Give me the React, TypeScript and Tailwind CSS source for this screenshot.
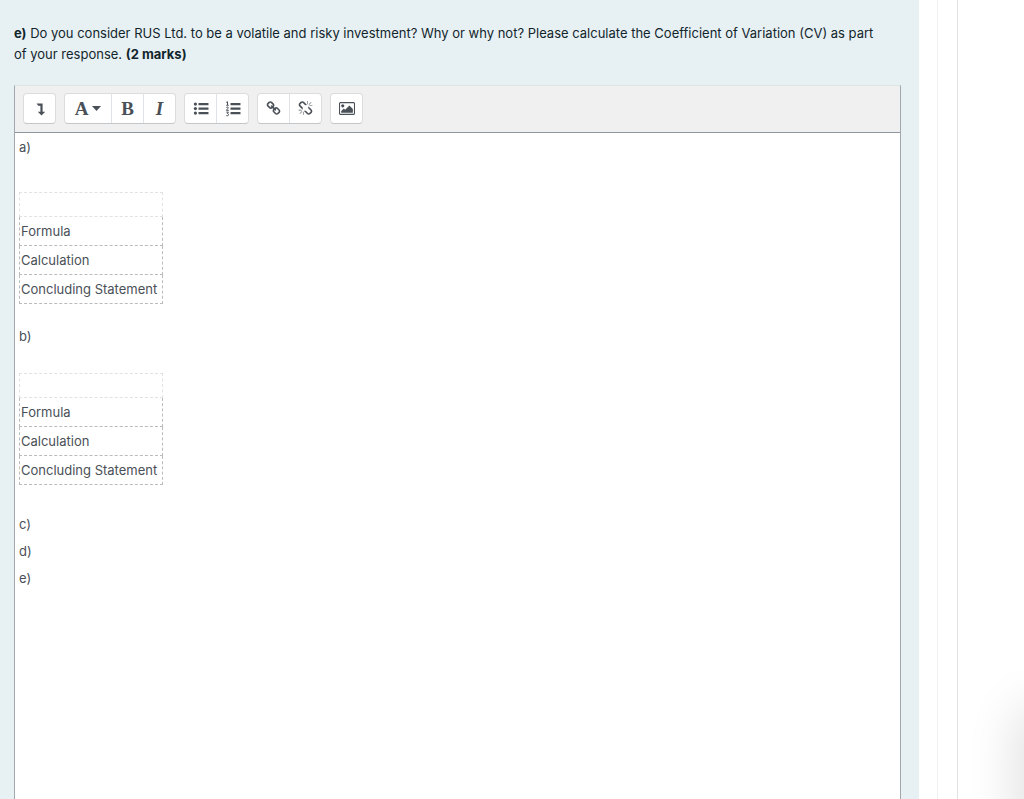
import type { ReactNode } from "react";

type IconProps = { path: string; viewBox?: string; className?: string };

function Glyph({ path, viewBox = "0 0 1792 1792", className = "size-[15px]" }: IconProps) {
  return (
    <svg viewBox={viewBox} className={className} fill="currentColor" aria-hidden="true">
      <path d={path} />
    </svg>
  );
}

const LINK =
  "M1520 1216q0-40-28-68l-208-208q-28-28-68-28-42 0-72 32 3 3 19 18.5t21.5 21.5 15 19 13 25.5 3.5 27.5q0 40-28 68t-68 28q-15 0-27.5-3.5t-25.5-13-19-15-21.5-21.5-18.5-19q-33 31-33 73 0 40 28 68l206 207q27 27 68 27 40 0 68-26l147-146q28-28 28-67zm-703-705q0-40-28-68l-206-207q-28-28-68-28-39 0-68 27l-147 146q-28 28-28 67 0 40 28 68l208 208q27 27 68 27 42 0 72-31-3-3-19-18.5t-21.5-21.5-15-19-13-25.5-3.5-27.5q0-40 28-68t68-28q15 0 27.5 3.5t25.5 13 19 15 21.5 21.5 18.5 19q33-31 33-73zm895 705q0 120-85 203l-147 146q-83 83-203 83-121 0-204-85l-206-207q-83-83-83-203 0-123 88-209l-88-88q-86 88-208 88-120 0-204-84l-208-208q-84-84-84-204t85-203l147-146q83-83 203-83 121 0 204 85l206 207q83 83 83 203 0 123-88 209l88 88q86-88 208-88 120 0 204 84l208 208q84 84 84 204z";

const UNLINK =
  "M503 1271l-256 256q-10 9-23 9-12 0-23-9-9-10-9-23t9-23l256-256q10-9 23-9t23 9q9 10 9 23t-9 23zm169 41v320q0 14-9 23t-23 9-23-9-9-23v-320q0-14 9-23t23-9 23 9 9 23zm-224-224q0 14-9 23t-23 9h-320q-14 0-23-9t-9-23 9-23 23-9h320q14 0 23 9t9 23zm1264 128q0 120-85 203l-147 146q-83 83-203 83-121 0-204-85l-334-335q-21-21-42-56l239-18 273 274q28 28 68 27.5t68-27.5l147-146q28-28 28-67 0-40-28-68l-274-275 18-239q35 21 56 42l336 336q84 86 84 204zm-617-724l-239 18-273-274q-28-28-68-28-39 0-68 27l-147 146q-28 28-28 67 0 40 28 68l274 274-18 240q-35-21-56-42l-336-336q-84-86-84-204 0-120 85-203l147-146q83-83 203-83 121 0 204 85l334 335q21 21 42 56zm633 84q0 14-9 23t-23 9h-320q-14 0-23-9t-9-23 9-23 23-9h320q14 0 23 9t9 23zm-544-544v320q0 14-9 23t-23 9-23-9-9-23v-320q0-14 9-23t23-9 23 9 9 23zm407 151l-256 256q-11 9-23 9t-23-9q-9-10-9-23t9-23l256-256q10-9 23-9t23 9q9 10 9 23t-9 23z";

const PICTURE =
  "M640 576q0 80-56 136t-136 56-136-56-56-136 56-136 136-56 136 56 56 136zm1024 384v448h-1408v-192l320-320 160 160 512-512zm96-704h-1600q-13 0-22.5 9.5t-9.5 22.5v1216q0 13 9.5 22.5t22.5 9.5h1600q13 0 22.5-9.5t9.5-22.5v-1216q0-13-9.5-22.5t-22.5-9.5zm160 32v1216q0 66-47 113t-113 47h-1600q-66 0-113-47t-47-113v-1216q0-66 47-113t113-47h1600q66 0 113 47t47 113z";

const LEVEL_DOWN = "M4.600 2.500H10.600V10.800H13.200L9.500 14.500 5.800 10.800H8.400V4.700H6.200z";

function Bars() {
  return (
    <>
      <rect x="5.5" y="2" width="10" height="2.200" rx="0.3" />
      <rect x="5.5" y="6.500" width="10" height="2.200" rx="0.3" />
      <rect x="5.5" y="11" width="10" height="2.200" rx="0.3" />
    </>
  );
}

function BulletList() {
  return (
    <svg viewBox="0 0 16 16" className="size-4" fill="currentColor" aria-hidden="true">
      <circle cx="2.400" cy="3.100" r="1.6" />
      <circle cx="2.400" cy="7.600" r="1.6" />
      <circle cx="2.400" cy="12.100" r="1.6" />
      <Bars />
    </svg>
  );
}

function NumberList() {
  return (
    <svg viewBox="0 0 16 16" className="size-4" fill="currentColor" aria-hidden="true">
      <g fill="none" stroke="currentColor" strokeWidth="1">
        <path d="M1.300 1.400 2.500 0.700V4M1.300 4.300H3.700" />
        <path d="M1.300 6.600C1.900 5.600 3.500 5.900 3.300 7 3.100 7.900 1.500 8.300 1.400 9.300H3.800" />
        <path d="M1.300 11.100H3.400L2.300 12.400C3.900 12.400 3.900 14.800 2.300 14.800 1.800 14.800 1.500 14.700 1.200 14.400" />
      </g>
      <Bars />
    </svg>
  );
}

function Group({ children }: { children: ReactNode }) {
  return (
    <div className="flex h-[31px] divide-x divide-[#dee2e6] overflow-hidden rounded-[4px] border border-[#dadcde] border-b-[#c4c7ca] bg-white">
      {children}
    </div>
  );
}

function Tool({ label, wide = false, children }: { label: string; wide?: boolean; children: ReactNode }) {
  return (
    <button
      type="button"
      aria-label={label}
      title={label}
      className={
        wide
          ? "box-content flex w-[46px] items-center justify-center gap-1"
          : "box-content flex w-[31px] items-center justify-center"
      }
    >
      {children}
    </button>
  );
}

const LETTER = "font-['Liberation_Serif',serif] text-[19px] leading-5";

function AnswerTable() {
  return (
    <table className="w-36 border-collapse">
      <thead>
        <tr className="h-6">
          <th scope="col" className="border border-dashed border-[#e2e2e2] p-0" />
        </tr>
      </thead>
      <tbody>
        {["Formula", "Calculation", "Concluding Statement"].map((row) => (
          <tr key={row} className="h-[29px]">
            <td className="border border-dashed border-[#bbb] px-px py-0">{row}</td>
          </tr>
        ))}
      </tbody>
    </table>
  );
}

export default function App() {
  return (
    <div className="relative flex min-h-screen overflow-hidden bg-white font-[Inter,sans-serif] text-[13px]">
      <main className="flex flex-1 flex-col bg-[#e7f1f4] pr-[18px] pl-[14px] pt-[23px]">
        <p className="pr-4 leading-[21px] text-[#12252b]">
          <b>e)</b> Do you consider RUS Ltd. to be a volatile and risky investment? Why or why not? Please
          calculate the Coefficient of Variation (CV) as part of your response. <b>(2 marks)</b>
        </p>

        <section className="mt-5 flex flex-1 flex-col border-x border-t border-[#a2a8b0] border-t-[#dde4e5] bg-white">
          <div
            role="toolbar"
            aria-label="Formatting"
            className="flex gap-2 border-b border-[#8f959e] bg-[#f0f0f0] px-2 pt-[7px] pb-2 text-[#495057]"
          >
            <Group>
              <Tool label="Show more buttons">
                <Glyph viewBox="0 0 16 16" path={LEVEL_DOWN} className="size-4" />
              </Tool>
            </Group>
            <Group>
              <Tool label="Paragraph styles" wide>
                <span className={`${LETTER} font-bold`}>A</span>
                <svg viewBox="0 0 9 5" className="h-[5px] w-[9px]" fill="currentColor" aria-hidden="true">
                  <path d="M0 0H9L4.5 5z" />
                </svg>
              </Tool>
              <Tool label="Bold">
                <span className={`${LETTER} font-bold`}>B</span>
              </Tool>
              <Tool label="Italic">
                <span className={`${LETTER} font-bold italic`}>I</span>
              </Tool>
            </Group>
            <Group>
              <Tool label="Unordered list">
                <BulletList />
              </Tool>
              <Tool label="Ordered list">
                <NumberList />
              </Tool>
            </Group>
            <Group>
              <Tool label="Link">
                <Glyph path={LINK} />
              </Tool>
              <Tool label="Unlink">
                <Glyph path={UNLINK} />
              </Tool>
            </Group>
            <Group>
              <Tool label="Insert image">
                <Glyph path={PICTURE} viewBox="0 0 1920 1792" className="h-[15px] w-4" />
              </Tool>
            </Group>
          </div>

          <div
            role="textbox"
            aria-label="Answer"
            aria-multiline="true"
            contentEditable
            suppressContentEditableWarning
            className="flex-1 px-1 pt-1 leading-5 text-[#495057] outline-none"
          >
            <p className="mb-[35px]">a)</p>
            <AnswerTable />
            <p className="mt-[22px] mb-[27px]">b)</p>
            <AnswerTable />
            <div className="mt-[29px] flex flex-col gap-[7px]">
              <p>c)</p>
              <p>d)</p>
              <p>e)</p>
            </div>
          </div>
        </section>
      </main>

      <aside className="flex w-[105px] shrink-0">
        <div className="w-[19px] border-r border-[#f0f1f2]" />
        <div className="w-5 border-r border-[#e0e1e3]" />
      </aside>
      <div className="absolute top-[715px] -right-10 h-[200px] w-10 rounded-lg bg-white shadow-[0_0_50px_8px_rgba(0,0,0,0.12)]" />
    </div>
  );
}
